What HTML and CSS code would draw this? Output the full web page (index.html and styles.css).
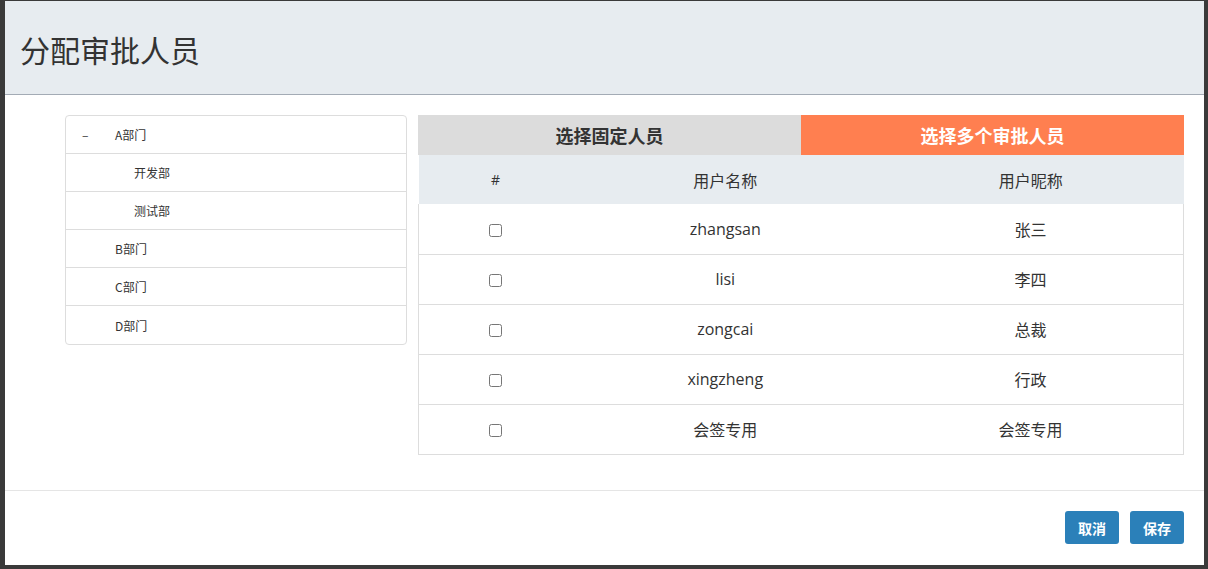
FILE: index.html
```html
<!DOCTYPE html>
<html lang="zh-CN">
<head>
<meta charset="UTF-8">
<title>分配审批人员</title>
<link rel="stylesheet" href="styles.css">
</head>
<body>

<div class="modal">
  <header class="modal-header">
    <h1>分配审批人员</h1>
  </header>

  <section class="modal-body">
    <!-- 部门树 -->
    <ul class="dept-tree">
      <li class="dept-item"><span class="toggle">–</span>A部门</li>
      <li class="dept-item child">开发部</li>
      <li class="dept-item child">测试部</li>
      <li class="dept-item">B部门</li>
      <li class="dept-item">C部门</li>
      <li class="dept-item">D部门</li>
    </ul>

    <div class="user-panel">
      <div class="tabs">
        <div class="tab">选择固定人员</div>
        <div class="tab active">选择多个审批人员</div>
      </div>
      <table class="user-table">
        <thead>
          <tr><th>#</th><th>用户名称</th><th>用户昵称</th></tr>
        </thead>
        <tbody>
          <tr><td><input type="checkbox"></td><td>zhangsan</td><td>张三</td></tr>
          <tr><td><input type="checkbox"></td><td>lisi</td><td>李四</td></tr>
          <tr><td><input type="checkbox"></td><td>zongcai</td><td>总裁</td></tr>
          <tr><td><input type="checkbox"></td><td>xingzheng</td><td>行政</td></tr>
          <tr><td><input type="checkbox"></td><td>会签专用</td><td>会签专用</td></tr>
        </tbody>
      </table>
    </div>
  </section>

  <footer class="modal-footer">
    <button class="btn">取消</button>
    <button class="btn">保存</button>
  </footer>
</div>

</body>
</html>
```

FILE: styles.css
```css
* { margin: 0; padding: 0; box-sizing: border-box; }
body { font-family: "Open Sans", "Noto Sans CJK SC", sans-serif; background-color: #3a3a3a; color: #333; }
.modal { width: 1199px; height: 564px; margin: 1px 0 0 5px; background-color: white; display: flex; flex-direction: column; }
.modal-header { height: 94px; background-color: #e7ecf0; border-bottom: 1px solid #a3abb5; display: flex; align-items: center; padding: 0 15px; }
.modal-header h1 { font-family: "Noto Sans CJK SC", sans-serif; font-size: 30px; font-weight: normal; color: #333; margin-top: 3px; }
.modal-body { height: 395px; display: flex; align-items: flex-start; gap: 11px; padding: 20px 20px 0 60px; }
.dept-tree { list-style: none; width: 342px; border: 1px solid #ddd; border-radius: 4px; font-family: "Noto Sans CJK SC", sans-serif; font-size: 12px; color: #333; }
.dept-item { height: 38px; display: flex; align-items: center; padding-left: 49px; border-bottom: 1px solid #ddd; position: relative; }
.dept-item:last-child { border-bottom: none; }
.dept-item.child { padding-left: 68px; }
.toggle { position: absolute; left: 16px; top: 10px; }
.user-panel { width: 766px; }
.tabs { display: flex; height: 40px; }
.tab { flex: 1; display: flex; align-items: center; justify-content: center; background-color: #dcdcdc; font-family: "Noto Sans CJK SC", sans-serif; font-size: 18px; font-weight: bold; color: #333; }
.tab.active { background-color: #ff7f50; color: white; }
.user-table { width: 100%; border-collapse: collapse; font-size: 16px; text-align: center; table-layout: fixed; }
.user-table th { height: 49px; background-color: #e7ecf0; font-weight: normal; font-family: "Noto Sans CJK SC", sans-serif; font-size: 16px; }
.user-table th:first-child { width: 154px; font-family: "Open Sans", sans-serif; font-size: 14px; }
.user-table td { height: 50px; border-bottom: 1px solid #ddd; }
.user-table td:first-child { border-left: 1px solid #ddd; }
.user-table td:last-child { border-right: 1px solid #ddd; }
.user-table input { width: 13px; height: 13px; vertical-align: middle; }
.modal-footer { flex: 1; border-top: 1px solid #e5e5e5; display: flex; justify-content: flex-end; align-items: flex-start; gap: 11px; padding: 20px 20px 0 0; }
.btn { width: 54px; height: 33px; background-color: #2b80b9; color: white; border: none; border-radius: 3px; font-family: "Noto Sans CJK SC", sans-serif; font-size: 14px; font-weight: bold; cursor: pointer; }
```
